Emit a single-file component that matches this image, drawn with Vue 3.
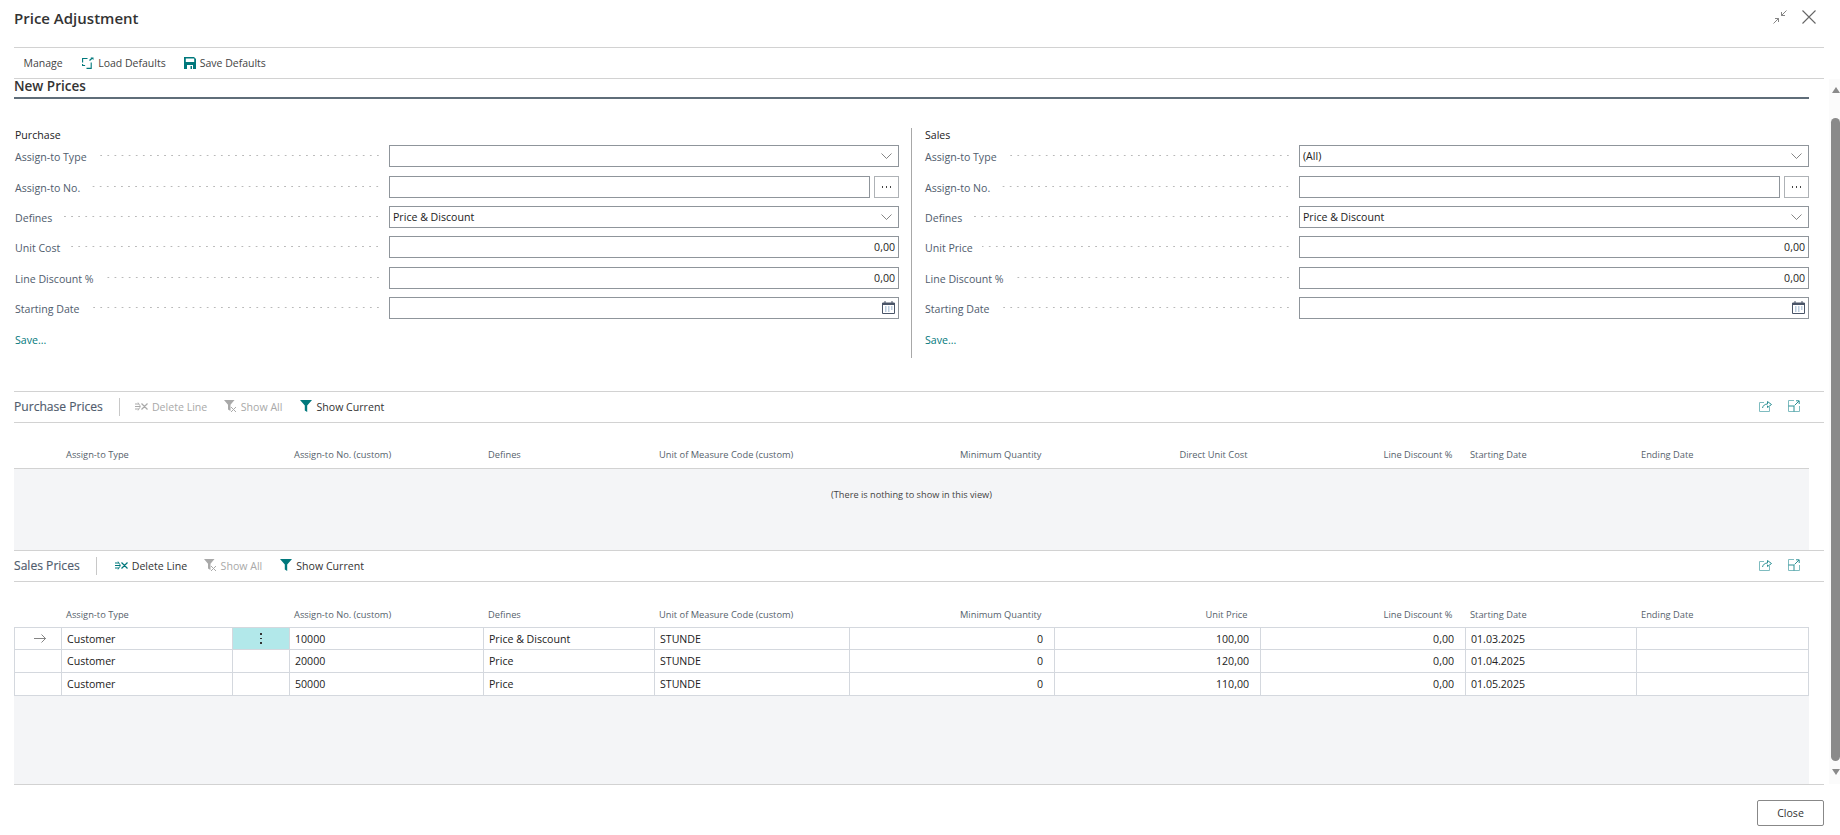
<script setup>
const columnsP = [
  { t: '' }, { t: 'Assign-to Type' }, { t: '' }, { t: 'Assign-to No. (custom)' }, { t: 'Defines' },
  { t: 'Unit of Measure Code (custom)' }, { t: 'Minimum Quantity', r: 1 }, { t: 'Direct Unit Cost', r: 1 },
  { t: 'Line Discount %', r: 1 }, { t: 'Starting Date' }, { t: 'Ending Date' }
]
const columnsS = columnsP.map(c => (c.t === 'Direct Unit Cost' ? { t: 'Unit Price', r: 1 } : c))
const rows = [
  { no: '10000', def: 'Price & Discount', price: '100,00', date: '01.03.2025', cur: true },
  { no: '20000', def: 'Price', price: '120,00', date: '01.04.2025' },
  { no: '50000', def: 'Price', price: '110,00', date: '01.05.2025' }
]
const forms = [
  { title: 'Purchase', cost: 'Unit Cost', type: '', cls: 'left' },
  { title: 'Sales', cost: 'Unit Price', type: '(All)', cls: 'right' }
]
</script>

<template>
  <div class="app">
    <header class="title-bar">
      <h1>Price Adjustment</h1>
      <div class="win-btns">
        <svg width="14" height="14" viewBox="0 0 14 14" fill="none" stroke="#777" stroke-width="0.9">
          <path d="M13.5 .5 8.5 5.5M8.5 2v3.5H12M.5 13.5l5-5M5.5 12V8.500H2" />
        </svg>
        <svg width="14" height="14" viewBox="0 0 14 14" fill="none" stroke="#666" stroke-width="1.1">
          <path d="M.5 .5l13 13M13.500 .5l-13 13" />
        </svg>
      </div>
    </header>

    <nav class="cmd-bar">
      <span class="cmd manage">Manage</span>
      <span class="cmd">
        <svg width="12" height="12" viewBox="0 0 12 12" fill="none" stroke="#00787c" stroke-width="1.1">
          <path d="M5.500 1.500H.6v4M.6 7v1.500h2.500M4.500 11.400h4.700V5.500" />
          <path d="M7.500 3.500 10 1.200" stroke-width="1.300" />
          <path d="M8.500 .5h3v2.500z" fill="#00787c" stroke="none" />
        </svg>
        Load Defaults
      </span>
      <span class="cmd">
        <svg width="12" height="12" viewBox="0 0 12 12">
          <path fill="#00787c" d="M0 0h10l2 2v10H0z" />
          <path fill="#fff" d="M1.800 1.500h8.400v3.500H1.800zM3 8h6v4H3z" />
          <path fill="#00787c" d="M6.500 9h1.500v3H6.500z" />
        </svg>
        Save Defaults
      </span>
    </nav>

    <div class="body">
      <main class="content">
        <h2 class="group-title">New Prices</h2>

        <section class="form">
          <div v-for="f in forms" :key="f.title" class="form-col" :class="f.cls">
            <h3>{{ f.title }}</h3>
            <div class="row">
              <label>Assign-to Type</label><i class="dots" />
              <div class="input"><span>{{ f.type }}</span>
                <svg class="chev" width="11" height="6" viewBox="0 0 11 6" fill="none" stroke="#666" stroke-width="0.8"><path d="M.5 .5l5 5 5-5" /></svg>
              </div>
            </div>
            <div class="row">
              <label>Assign-to No.</label><i class="dots" />
              <div class="input short" />
              <button class="more" type="button"><i /><i /><i /></button>
            </div>
            <div class="row">
              <label>Defines</label><i class="dots" />
              <div class="input"><span>Price &amp; Discount</span>
                <svg class="chev" width="11" height="6" viewBox="0 0 11 6" fill="none" stroke="#666" stroke-width="0.8"><path d="M.5 .5l5 5 5-5" /></svg>
              </div>
            </div>
            <div class="row">
              <label>{{ f.cost }}</label><i class="dots" />
              <div class="input num"><span>0,00</span></div>
            </div>
            <div class="row">
              <label>Line Discount %</label><i class="dots" />
              <div class="input num"><span>0,00</span></div>
            </div>
            <div class="row">
              <label>Starting Date</label><i class="dots" />
              <div class="input">
                <svg class="cal" width="13" height="13" viewBox="0 0 13 13" fill="none">
                  <path d="M.5 2h12v10.500H.5z" stroke="#4a5568" />
                  <path d="M.5 2h12v2H.5z" fill="#4a5568" />
                  <path d="M3 0v2M10 0v2" stroke="#4a5568" />
                  <path d="M3 6h1.500M6 6h1.500M9 6h1.500M3 8h1.500M6 8h1.500M9 8h1.500M3 10h1.500M6 10h1.500" stroke="#7a9cc0" />
                </svg>
              </div>
            </div>
            <a class="save">Save...</a>
          </div>
        </section>

        <section class="part purchase">
          <div class="part-bar">
            <span class="part-title">Purchase Prices</span>
            <span class="sep" />
            <span class="tool off del">
              <svg width="13" height="11" viewBox="0 0 13 11" fill="none" stroke="#a9a9a9" stroke-width="1.200">
                <path d="M0 3h4M0 5.500h5M0 8h4M6.500 2.500l6 6M12.500 2.500l-6 6" /><path d="M3 1.500l2.500 4-2.500 4" stroke-width="0.8" />
              </svg>Delete Line
            </span>
            <span class="tool off all">
              <svg width="13" height="13" viewBox="0 0 13 13">
                <path fill="#a9a9a9" d="M0 0h10.500L6.500 4.700V11L4 9.500V4.700z" />
                <path d="M7 7l5 5M12 7l-5 5" stroke="#a9a9a9" fill="none" />
              </svg>Show All
            </span>
            <span class="tool cur">
              <svg width="12" height="12" viewBox="0 0 12 12"><path fill="#00787c" d="M0 0h12L7.200 5.500V12L4.800 10.500V5.500z" /></svg>Show Current
            </span>
            <span class="part-end">
              <svg width="13" height="12" viewBox="0 0 13 12" fill="none" stroke="#2b8f94" stroke-width="1">
                <path d="M5 2.500H.5v9h10V7" stroke="#7fbcc0" /><path d="M3.500 8C4 5.500 6 4 8.500 4V1.500L12.500 4.500 8.500 7.500V5.700" />
              </svg>
              <svg width="12" height="12" viewBox="0 0 12 12" fill="none" stroke="#2b8f94" stroke-width="1">
                <path d="M6 .5H.5v11h11V6" stroke="#7fbcc0" /><path d="M.5 6h5.500v5.500M6.500 5.500 11 1M8 .8h3.200V4" />
              </svg>
            </span>
          </div>
          <div class="grid-head">
            <span v-for="(c, i) in columnsP" :key="i" :class="{ r: c.r }">{{ c.t }}</span>
          </div>
          <div class="empty">(There is nothing to show in this view)</div>
        </section>

        <section class="part sales">
          <div class="part-bar">
            <span class="part-title">Sales Prices</span>
            <span class="sep" />
            <span class="tool del">
              <svg width="13" height="11" viewBox="0 0 13 11" fill="none" stroke="#00787c" stroke-width="1.200">
                <path d="M0 3h4M0 5.500h5M0 8h4M6.500 2.500l6 6M12.500 2.500l-6 6" /><path d="M3 1.500l2.500 4-2.500 4" stroke-width="0.8" />
              </svg>Delete Line
            </span>
            <span class="tool off all">
              <svg width="13" height="13" viewBox="0 0 13 13">
                <path fill="#a9a9a9" d="M0 0h10.500L6.500 4.700V11L4 9.500V4.700z" />
                <path d="M7 7l5 5M12 7l-5 5" stroke="#a9a9a9" fill="none" />
              </svg>Show All
            </span>
            <span class="tool cur">
              <svg width="12" height="12" viewBox="0 0 12 12"><path fill="#00787c" d="M0 0h12L7.200 5.500V12L4.800 10.500V5.500z" /></svg>Show Current
            </span>
            <span class="part-end">
              <svg width="13" height="12" viewBox="0 0 13 12" fill="none" stroke="#2b8f94" stroke-width="1">
                <path d="M5 2.500H.5v9h10V7" stroke="#7fbcc0" /><path d="M3.500 8C4 5.500 6 4 8.500 4V1.500L12.500 4.500 8.500 7.500V5.700" />
              </svg>
              <svg width="12" height="12" viewBox="0 0 12 12" fill="none" stroke="#2b8f94" stroke-width="1">
                <path d="M6 .5H.5v11h11V6" stroke="#7fbcc0" /><path d="M.5 6h5.500v5.500M6.500 5.500 11 1M8 .8h3.200V4" />
              </svg>
            </span>
          </div>
          <div class="grid-head">
            <span v-for="(c, i) in columnsS" :key="i" :class="{ r: c.r }">{{ c.t }}</span>
          </div>
          <div class="grid-wrap">
            <div class="grid">
              <div v-for="r in rows" :key="r.no" class="grid-row">
                <span class="cell arrow">
                  <svg v-if="r.cur" width="12" height="9" viewBox="0 0 12 9" fill="none" stroke="#666" stroke-width="0.8"><path d="M0 4.500h11.500M7.500 .5l4 4-4 4" /></svg>
                </span>
                <span class="cell">Customer</span>
                <span class="cell menu" :class="{ active: r.cur }"><template v-if="r.cur">
                  <i /><i /><i /></template></span>
                <span class="cell">{{ r.no }}</span>
                <span class="cell">{{ r.def }}</span>
                <span class="cell">STUNDE</span>
                <span class="cell r">0</span>
                <span class="cell r">{{ r.price }}</span>
                <span class="cell r">0,00</span>
                <span class="cell">{{ r.date }}</span>
                <span class="cell" />
              </div>
            </div>
          </div>
        </section>
      </main>

      <aside class="scrollbar">
        <span class="up" />
        <span class="thumb" />
        <span class="down" />
      </aside>
    </div>

    <footer class="footer">
      <button class="close" type="button">Close</button>
    </footer>
  </div>
</template>

<style>
html, body { margin: 0; background: #fff; overflow: hidden; }
</style>

<style scoped>
.app {
  width: 1840px;
  height: 835px;
  display: flex;
  flex-direction: column;
  background: #fff;
  font-family: "Open Sans", "Noto Sans", sans-serif;
  font-size: 10.6px;
  color: #212121;
  overflow: hidden;
}
.title-bar {
  margin: 0 16px 0 14px;
  display: flex;
  align-items: flex-start;
  justify-content: space-between;
  border-bottom: 1px solid #d2d2d2;
  box-sizing: border-box;
  height: 48px;
}
.title-bar h1 {
  margin: 8px 0 0 0;
  font-size: 15px;
  line-height: 20px;
  font-weight: 600;
  color: #333;
}
.win-btns {
  display: flex;
  gap: 15px;
  margin: 10px 8px 0 0;
}
.cmd-bar {
  height: 31px;
  margin: 0 16px 0 14px;
  box-sizing: border-box;
  display: flex;
  align-items: center;
  border-bottom: 1px solid #d2d2d2;
  padding-left: 9.500px;
}
.cmd {
  display: inline-flex;
  align-items: center;
  gap: 4px;
  margin-right: 18px;
  color: #444;
  font-size: 10.5px;
}
.cmd.manage { margin-right: 19.500px; }
.body {
  flex: 1;
  display: flex;
  min-height: 0;
  height: 705px;
}
.content {
  width: 1795px;
  margin-left: 14px;
  flex: none;
  display: flex;
  flex-direction: column;
}
.group-title {
  margin: 0;
  height: 18px;
  padding-left: 0;
  box-sizing: content-box;
  font-size: 13.500px;
  font-weight: 600;
  line-height: 15px;
  color: #333;
  border-bottom: 2px solid #5f6d79;
}
.form {
  display: flex;
  margin-top: 29.500px;
  height: 230px;
}
.form-col { box-sizing: border-box; }
.form-col.left { width: 898px; padding-left: 1px; padding-right: 12px; border-right: 1px solid #a8a8a8; }
.form-col.right { flex: 1; padding-left: 13px; padding-right: 0; }
.form-col h3 {
  margin: 0;
  height: 17px;
  font-size: 10.6px;
  font-weight: 400;
  line-height: 14px;
  color: #222;
}
.row {
  height: 30.300px;
  display: flex;
  align-items: flex-start;
}
.row label {
  color: #505c6d;
  line-height: 24px;
  white-space: nowrap;
}
.dots {
  flex: 1;
  height: 21px;
  margin: 0 8px 0 9px;
  background: radial-gradient(circle, #b9b9b9 .6px, transparent .7px) right center / 7.100px 3px repeat-x;
}
.input {
  width: 510px;
  height: 22px;
  box-sizing: border-box;
  border: 1px solid #8f959b;
  display: flex;
  align-items: center;
  justify-content: space-between;
  padding: 0 2px 0 3px;
  position: relative;
  color: #212121;
}
.input.short { width: 481px; }
.input.num { justify-content: flex-end; }
.input.num span { padding-right: 1px; }
.chev { margin-right: 4px; }
.cal { margin-left: auto; margin-right: 1.500px; }
.more {
  width: 25px;
  height: 22px;
  margin-left: 4px;
  padding: 0;
  box-sizing: border-box;
  border: 1px solid #aeb2b6;
  background: #fff;
  display: flex;
  align-items: center;
  justify-content: center;
  gap: 2.500px;
}
.more i {
  width: 1.500px;
  height: 1.500px;
  background: #444;
  display: block;
}
.save {
  display: block;
  color: #00787c;
  line-height: 24px;
  padding-top: .6px;
}
.part { display: flex; flex-direction: column; }
.purchase { margin-top: 32.500px; }
.part-bar {
  height: 32px;
  box-sizing: border-box;
  border-top: 1px solid #d2d2d2;
  border-bottom: 1px solid #d2d2d2;
  display: flex;
  align-items: center;
  padding-left: 0;
  width: 1810px;
}
.part-title {
  font-size: 12.100px;
  font-weight: 500;
  color: #505c6d;
  -webkit-text-stroke: .15px #505c6d;
}
.sep {
  width: 1px;
  height: 18px;
  background: #c8c8c8;
  margin: 0 15px 0 16px;
}
.sales .sep { margin-right: 18px; }
.tool {
  display: inline-flex;
  align-items: center;
  gap: 4px;
  margin-right: 18px;
  color: #333;
}
.tool.del { margin-right: 16.500px; }
.tool svg { margin-bottom: 1px; }
.tool.off { color: #a9a9a9; }
.part-end {
  margin-left: auto;
  margin-right: 24px;
  margin-bottom: 2px;
  display: inline-flex;
  align-items: center;
  gap: 16px;
}
.grid-head {
  height: 46px;
  display: grid;
  grid-template-columns: 47px 171px 57px 194px 171px 195px 205px 206px 205px 171px 1fr;
  box-sizing: border-box;
  align-items: end;
  font-size: 9.300px;
  color: #565f6c;
  padding-bottom: 7px;
}
.purchase .grid-head { border-bottom: 1px solid #d2d2d2; height: 46px; }
.grid-head span { padding: 0 5px; white-space: nowrap; line-height: 13px; }
.grid-head span.r { text-align: right; padding-right: 12.500px; }
.empty {
  height: 81px;
  background: #f4f5f7;
  display: flex;
  align-items: center;
  justify-content: center;
  font-size: 9.200px;
  color: #444;
  padding-bottom: 28.500px;
  box-sizing: border-box;
}
.sales .part-bar { border-top: 1px solid #d2d2d2; }
.sales .grid-head { height: 45px; padding-bottom: 6px; }
.grid-wrap {
  height: 157.500px;
  background: #f4f5f7;
}
.grid { border: 1px solid #d4d8de; border-width: 1px 1px 0 1px; width: 1794.500px; box-sizing: border-box; margin-left: 0; }
.grid-row {
  height: 22.700px;
  box-sizing: border-box;
  display: grid;
  grid-template-columns: 46px 171px 57px 194px 171px 195px 205px 206px 205px 171px 1fr;
  grid-template-rows: 21.700px;
  border-bottom: 1px solid #d4d8de;
  background: #fff;
}
.cell {
  box-sizing: border-box;
  padding: 1px 5px 0;
  line-height: 21.700px;
  border-left: 1px solid #d4d8de;
  white-space: nowrap;
  font-size: 10.600px;
}
.cell:first-child { border-left: none; }
.cell.r { text-align: right; padding-right: 11px; }
.arrow { display: flex; align-items: center; justify-content: center; padding: 0 0 0 3px; }
.menu { display: flex; flex-direction: column; align-items: center; justify-content: center; gap: 3px; padding: 0; }
.menu.active { background: #b2e8ea; }
.menu i { width: 1.600px; height: 1.600px; background: #333; display: block; }
.scrollbar {
  width: 11px;
  margin-left: 20px;
  height: 705px;
  background: #fbfbfb;
  display: flex;
  flex-direction: column;
  align-items: flex-end;
  position: relative;
}
.up, .down {
  width: 0;
  height: 0;
  border-left: 4.500px solid transparent;
  border-right: 4.500px solid transparent;
}
.up { border-bottom: 6px solid #8a8a8a; margin-top: 8px; }
.down { border-top: 6px solid #8a8a8a; margin-top: 8px; }
.thumb {
  width: 9px;
  height: 643px;
  margin-top: 25px;
  background: #8a8a8a;
  border-radius: 5px;
}
.footer {
  height: 51px;
  margin: 0 16px 0 14px;
  box-sizing: border-box;
  border-top: 1px solid #d2d2d2;
  display: flex;
  justify-content: flex-end;
  padding-top: 15px;
  flex: none;
}
.close {
  width: 67px;
  height: 26px;
  box-sizing: border-box;
  border: 1px solid #888;
  border-radius: 2px;
  background: #fff;
  color: #333;
  font: 10.600px "Open Sans", sans-serif;
  padding: 0;
}
</style>
